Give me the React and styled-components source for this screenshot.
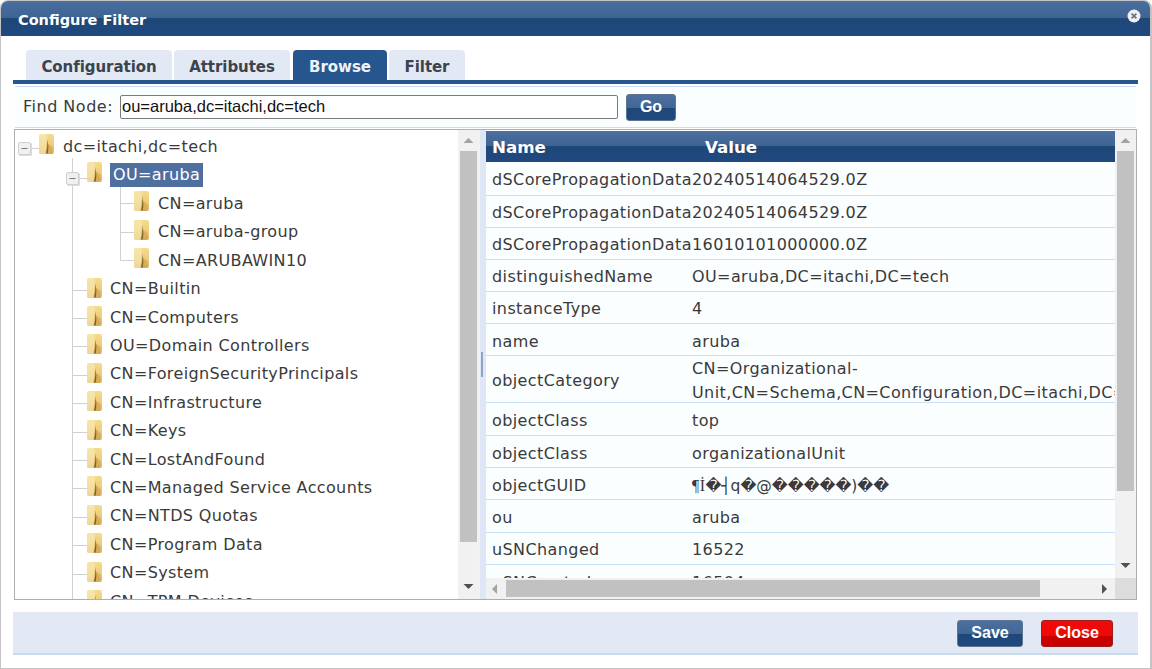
import React from "react";
import styled, { createGlobalStyle } from "styled-components";

const Global = createGlobalStyle`
  html, body { margin: 0; padding: 0; background: #fff; }
  body { font-family: "DejaVu Sans", Verdana, sans-serif; color: #3a3a3a; }
  * { box-sizing: border-box; }
`;

const Dialog = styled.div`
  width: 1152px; height: 669px; overflow: hidden;
  border: 1px solid #c4c4c4; border-width: 1px 2px 1px 1px; border-radius: 8px 8px 0 0;
  background: #fff; display: flex; flex-direction: column;
`;
const TitleBar = styled.div`
  height: 35px; flex: none; display: flex; align-items: center; justify-content: space-between;
  padding: 2px 9px 0 17px;
  background: linear-gradient(#4b6f9e 0, #3d6493 48%, #1f4777 50%, #1f4a80 100%);
  color: #fff; font-weight: 700; font-size: 14.5px;
`;
const CloseIcon = styled.svg` width: 14px; height: 14px; margin-top: -8px; display: block; `;

const Body = styled.div` flex: 1; display: flex; flex-direction: column; padding: 14px 12px 0 12px; min-height: 0; `;
const Tabs = styled.div`
  display: flex; gap: 2px; padding-left: 13px; height: 30px; flex: none;
`;
const Tab = styled.div`
  width: ${p => p.$w}px; margin-right: ${p => p.$mr || 0}px; height: 30px; border-radius: 4px 4px 0 0;
  display: flex; align-items: center; justify-content: center; padding-top: 4px;
  font-weight: 700; font-size: 15px; letter-spacing: -.05px;
  background: ${p => (p.$active ? "#27568f" : "#e2e9f4")};
  color: ${p => (p.$active ? "#eef3fa" : "#3c434d")};
`;
const TabRule = styled.div` height: 4px; flex: none; background: #27568f; width: 1125px; `;
const FindBar = styled.div`
  margin: 2px 2px 1px 2px; height: 42px; flex: none; width: 1121px;
  border-top: 1px solid #c9dcf7; border-bottom: 1px solid #c9dcf7;
  background: #fafeff; display: flex; align-items: center; padding-left: 8px;
`;
const FindLabel = styled.label` font-size: 16px; letter-spacing: .5px; color: #3a3a3a; width: 97px; flex: none; padding-bottom: 2px; `;
const FindInput = styled.input`
  width: 498px; height: 24px; border: 1px solid #7b7b7b; border-radius: 2px; padding: 0 1px 1px; outline: none;
  font-family: "Liberation Sans", Arial, sans-serif; font-size: 16.5px; color: #111; background: #fff;
`;
const Btn = styled.button`
  border: 1px solid ${p => (p.$red ? "#9a2020" : "#5d7490")}; border-radius: 3px; color: #fff; padding: 0 0 2px;
  font-family: "Liberation Sans", Arial, sans-serif; font-weight: 700; font-size: 16px;
  width: ${p => p.$w}px; height: 27px; flex: none;
  background: ${p => p.$red
    ? "linear-gradient(#f10a0a 0, #ee0808 58%, #c90000 60%, #c90000 100%)"
    : "linear-gradient(#4c6f9f 0, #426793 52%, #1f4779 54%, #1f4a80 100%)"};
`;
const GoBtn = styled(Btn)` margin-left: 8px; padding: 0; `;

const Split = styled.div`
  width: 1123px; height: 471px; flex: none; margin-left: 1px; border: 1px solid #aeaeae;
  display: flex; overflow: hidden;
`;
const TreePane = styled.div` width: 464px; flex: none; display: flex; min-width: 0; `;
const TreeScroll = styled.div` flex: 1; overflow: hidden; padding-top: 2.5px; min-width: 0; `;
const Row = styled.div`
  height: 28.42px; display: flex; align-items: center; padding-left: ${p => p.$indent}px;
  font-size: 16px; letter-spacing: .37px; color: #3a3a3a; white-space: nowrap;
`;
const Gutter = styled.svg` flex: none; display: block; overflow: visible; align-self: flex-start; `;
const NodeLabel = styled.span`
  margin-left: ${p => p.$ml ?? 0}px; padding: ${p => (p.$sel ? "2px 3px 3px 3px" : "0")};
  background: ${p => (p.$sel ? "#4f6f9f" : "transparent")};
  color: ${p => (p.$sel ? "#fff" : "#3a3a3a")};
`;

const VBar = styled.div`
  width: 21px; flex: none; background: #f1f1f1; display: flex; flex-direction: column; align-items: center;
`;
const Arrow = styled.svg` flex: none; display: block; `;
const ThumbV = styled.div` width: 17px; height: ${p => p.$h}px; background: #c1c1c1; flex: none; `;
const Spacer = styled.div` flex: 1; `;

const Splitter = styled.div`
  width: 7px; flex: none; background: #dfe7f7; border-left: 1px solid #eef2fb; display: flex; align-items: center;
`;
const SplitHandle = styled.div` width: 2px; height: 25px; margin-left: 1px; background: #8fa3c3; `;

const RightPane = styled.div` flex: 1; min-width: 0; display: grid; grid-template-columns: 629px 21px; grid-template-rows: 448px 21px; `;
const TableClip = styled.div` overflow: hidden; padding-top: 1px; min-width: 0; `;
const Table = styled.table`
  border-collapse: separate; border-spacing: 0; table-layout: fixed; width: 629px; font-size: 16px; letter-spacing: .4px; color: #3a3a3a;
`;
const Th = styled.th`
  height: 31px; text-align: left; color: #fff; font-size: 16.7px; letter-spacing: 0; font-weight: 700; padding: 0 0 0 ${p => p.$pl || 6}px;
  background: linear-gradient(#4b6f9e 0, #3d6493 48%, #1f4777 50%, #1f4a80 100%);
`;
const Td = styled.td`
  height: ${p => p.$h}px; padding: ${p => p.$pt}px 0 0 6px; vertical-align: middle; line-height: 20px;
  background: #fafeff; border-bottom: 1px solid #c9dff7; white-space: ${p => (p.$wrap ? "normal" : "nowrap")};
`;
const WideText = styled.div` width: 300px; height: 46px; padding-top: 1px; line-height: 24px; `;
const Guid = styled.span` letter-spacing: 0; font-size: 15.5px; `;
const GuidSerif = styled.span` font-family: "Liberation Serif", serif; font-size: 16px; letter-spacing: .4px; `;
const HBar = styled.div` height: 21px; background: #f1f1f1; display: flex; align-items: center; padding: 1px 0 1px; `;
const ThumbH = styled.div` width: 534px; height: 17px; background: #c1c1c1; flex: none; `;
const Corner = styled.div` background: #dcdcdc; `;

const Footer = styled.div`
  margin-top: 12px; width: 1125px; height: 43px; flex: none; background: #e2e9f4; border-bottom: 2px solid #c9dcef;
  display: flex; align-items: flex-start; justify-content: flex-end; gap: 18px; padding: 8px 25px 0 0;
`;

const Folder = ({ x, y }) => (
  <g transform={`translate(${x} ${y})`}>
    <rect x="0" y="0" width="15" height="20" rx="2" fill="url(#fg)" />
    <path d="M0 3 q0-3 3-3 h4 l1 4 -1.5 15.5 q0 .5-1 .5 H2 q-2 0-2-2z" fill="#f9ecba" opacity=".6" />
    <path d="M8 9 L13.5 13 V18.5 q0 1.5-1.5 1.5 H7z" fill="#cfa14c" opacity=".6" />
    <path d="M7.8 5 c1 4 .8 9-.8 14.5 h1.6 c1.2-5 1-10-.8-14.5z" fill="#6b5226" opacity=".85" />
  </g>
);

const Defs = () => (
  <svg width="0" height="0" style={{ position: "absolute" }}>
    <defs>
      <linearGradient id="fg" x1="0" y1="0" x2="0" y2="1">
        <stop offset="0" stopColor="#f4dc8f" />
        <stop offset=".6" stopColor="#efca78" />
        <stop offset="1" stopColor="#dcb264" />
      </linearGradient>
    </defs>
  </svg>
);

const Toggle = ({ x, y }) => (
  <g>
    <rect x={x + 1} y={y + 1} width="13" height="13" rx="1.5" fill="#dcdcdc" />
    <rect x={x + .5} y={y + .5} width="12" height="12" rx="1.5" fill="#f0f0f0" stroke="#cfcfcf" />
    <path d={`M${x + 3.5} ${y + 6.5}h6`} stroke="#777" strokeWidth="1" />
  </g>
);

const LINE = "#d0d0d0";

const RootGutter = () => (
  <Gutter width="40" height="29">
    <path d="M13 15.5h8" stroke={LINE} />
    <Toggle x={0} y={9} />
    <Folder x={21} y={1} />
  </Gutter>
);
const OuGutter = () => (
  <Gutter width="40" height="29">
    <path d="M6.5 -3V11M6.5 24V29M13 17.5h8" stroke={LINE} />
    <Toggle x={0} y={11} />
    <Folder x={21} y={1} />
  </Gutter>
);
const LeafGutter = ({ first, last }) => (
  <Gutter width="86" height="29">
    <path d={`M.5 0V29M48.5 ${first ? -2 : 0}V${last ? 14.5 : 29}M48.5 14.5H63`} stroke={LINE} />
    <Folder x={62} y={2} />
  </Gutter>
);
const ChildGutter = () => (
  <Gutter width="38" height="29">
    <path d="M.5 0V29M.5 15.5H15" stroke={LINE} />
    <Folder x={15} y={3} />
  </Gutter>
);

const Up = () => <Arrow width="11" height="21" viewBox="0 0 11 21"><path d="M0.5 13 L5.5 8 L10.5 13z" fill="#a3a3a3" /></Arrow>;
const Down = () => <Arrow width="11" height="21" viewBox="0 0 11 21"><path d="M0.5 6 L5.5 11 L10.5 6z" fill="#505050" /></Arrow>;
const Left = () => <Arrow width="20" height="16" viewBox="0 0 20 16"><path d="M11 3 L6 8 L11 13z" fill="#a3a3a3" /></Arrow>;
const Right = () => <Arrow width="16" height="16" viewBox="0 0 16 16"><path d="M3 3 L8 8 L3 13z" fill="#505050" /></Arrow>;

const children = ["CN=Builtin", "CN=Computers", "OU=Domain Controllers", "CN=ForeignSecurityPrincipals", "CN=Infrastructure", "CN=Keys", "CN=LostAndFound", "CN=Managed Service Accounts", "CN=NTDS Quotas", "CN=Program Data", "CN=System", "CN=TPM Devices"];
const leaves = ["CN=aruba", "CN=aruba-group", "CN=ARUBAWIN10"];

const attrs = [
  { n: "dSCorePropagationData", v: "20240514064529.0Z", h: 33.5, pt: 4 },
  { n: "dSCorePropagationData", v: "20240514064529.0Z", h: 32.15, pt: 4 },
  { n: "dSCorePropagationData", v: "16010101000000.0Z", h: 32.15, pt: 4 },
  { n: "distinguishedName", v: "OU=aruba,DC=itachi,DC=tech", h: 32.15, pt: 4 },
  { n: "instanceType", v: "4", h: 32.15, pt: 4 },
  { n: "name", v: "aruba", h: 32.15, pt: 4 },
  { n: "objectCategory", v: <WideText>CN=Organizational-Unit,CN=Schema,CN=Configuration,DC=itachi,DC=tech</WideText>, h: 47, pt: 0, npt: 4, wrap: true },
  { n: "objectClass", v: "top", h: 32.4, pt: 4 },
  { n: "objectClass", v: "organizationalUnit", h: 32.4, pt: 5 },
  { n: "objectGUID", v: <Guid><GuidSerif>¶İ</GuidSerif>�┤q�@�����)��</Guid>, h: 32.4, pt: 4 },
  { n: "ou", v: "aruba", h: 32.4, pt: 4 },
  { n: "uSNChanged", v: "16522", h: 32.4, pt: 4 },
  { n: "uSNCreated", v: "16504", h: 32.4, pt: 4 },
];

export default function App() {
  return (
    <>
      <Global />
      <Defs />
      <Dialog>
        <TitleBar>
          Configure Filter
          <CloseIcon viewBox="0 0 14 14">
            <circle cx="7" cy="7" r="6.5" fill="#eef0f4" />
            <path d="M4.6 4.6l4.8 4.8M9.4 4.6L4.6 9.4" stroke="#6d7480" strokeWidth="1.7" />
          </CloseIcon>
        </TitleBar>
        <Body>
          <Tabs>
            <Tab $w={146}>Configuration</Tab>
            <Tab $w={116} $mr={1}>Attributes</Tab>
            <Tab $w={94} $active>Browse</Tab>
            <Tab $w={76}>Filter</Tab>
          </Tabs>
          <TabRule />
          <FindBar>
            <FindLabel>Find Node:</FindLabel>
            <FindInput defaultValue="ou=aruba,dc=itachi,dc=tech" />
            <GoBtn $w={50}>Go</GoBtn>
          </FindBar>
          <Split>
            <TreePane>
              <TreeScroll>
                <Row $indent={3}><RootGutter /><NodeLabel $ml={5}>dc=itachi,dc=tech</NodeLabel></Row>
                <Row $indent={51}><OuGutter /><NodeLabel $ml={4} $sel>OU=aruba</NodeLabel></Row>
                {leaves.map((l, i) => (
                  <Row key={l} $indent={57}><LeafGutter first={i === 0} last={i === 2} /><NodeLabel>{l}</NodeLabel></Row>
                ))}
                {children.map(c => (
                  <Row key={c} $indent={57}><ChildGutter /><NodeLabel>{c}</NodeLabel></Row>
                ))}
              </TreeScroll>
              <VBar>
                <Up />
                <ThumbV $h={391} />
                <Spacer />
                <Down />
              </VBar>
            </TreePane>
            <Splitter><SplitHandle /></Splitter>
            <RightPane>
              <TableClip>
                <Table>
                  <colgroup><col style={{ width: 200 }} /><col /></colgroup>
                  <thead>
                    <tr><Th>Name</Th><Th $pl={19}>Value</Th></tr>
                  </thead>
                  <tbody>
                    {attrs.map((a, i) => (
                      <tr key={i}>
                        <Td $h={a.h} $pt={a.npt ?? a.pt}>{a.n}</Td>
                        <Td $h={a.h} $pt={a.pt} $wrap={a.wrap}>{a.v}</Td>
                      </tr>
                    ))}
                  </tbody>
                </Table>
              </TableClip>
              <VBar>
                <Up />
                <ThumbV $h={340} />
                <Spacer />
                <Down />
              </VBar>
              <HBar><Left /><ThumbH /><Spacer /><Right /></HBar>
              <Corner />
            </RightPane>
          </Split>
          <Footer>
            <Btn $w={66}>Save</Btn>
            <Btn $w={72} $red>Close</Btn>
          </Footer>
        </Body>
      </Dialog>
    </>
  );
}
